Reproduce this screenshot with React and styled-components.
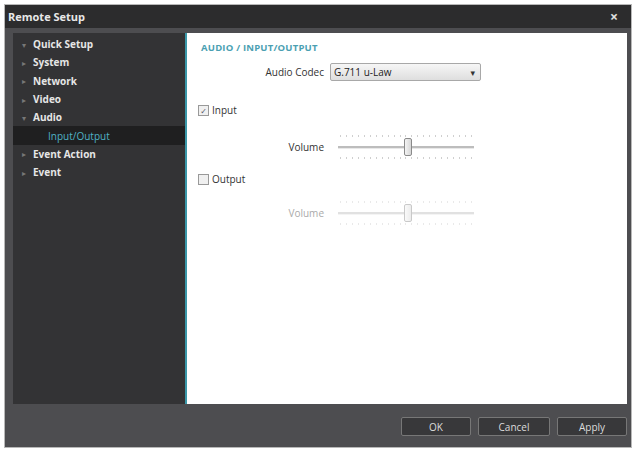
import React, { useState } from "react";
import styled, { createGlobalStyle } from "styled-components";

const GlobalStyle = createGlobalStyle`
  body {
    margin: 0;
    background: #ffffff;
    font-family: "Open Sans", "Noto Sans", "DejaVu Sans", sans-serif;
  }
`;

const menu = [
  { label: "Quick Setup", open: true },
  { label: "System" },
  { label: "Network" },
  { label: "Video" },
  { label: "Audio", open: true },
  { label: "Input/Output", child: true, active: true },
  { label: "Event Action" },
  { label: "Event" },
];

const Slider = ({ value, disabled }) => (
  <SliderBox disabled={disabled}>
    <Ticks>
      {Array.from({ length: 23 }).map((_, i) => (
        <Tick key={i} />
      ))}
    </Ticks>
    <Track>
      <Thumb style={{ left: `${value}%` }} />
    </Track>
    <Ticks>
      {Array.from({ length: 23 }).map((_, i) => (
        <Tick key={i} />
      ))}
    </Ticks>
  </SliderBox>
);

const App = () => {
  const [input, setInput] = useState(true);
  const [output, setOutput] = useState(false);

  return (
    <>
      <GlobalStyle />
      <Window>
        <TitleBar>
          <Title>Remote Setup</Title>
          <Close>×</Close>
        </TitleBar>
        <Body>
          <Main>
            <Sidebar>
              {menu.map((item) => (
                <MenuRow key={item.label} child={item.child} active={item.active}>
                  {!item.child && <Arrow>{item.open ? "▾" : "▸"}</Arrow>}
                  {item.label}
                </MenuRow>
              ))}
            </Sidebar>
            <Content>
              <Heading>AUDIO / INPUT/OUTPUT</Heading>
              <FieldRow top={9}>
                <Label>Audio Codec</Label>
                <Select>
                  <span>G.711 u-Law</span>
                  <Caret>▾</Caret>
                </Select>
              </FieldRow>
              <CheckRow top={23} onClick={() => setInput(!input)}>
                <Box>{input && "✓"}</Box>
                Input
              </CheckRow>
              <FieldRow top={19}>
                <Label>Volume</Label>
                <Slider value={50} />
              </FieldRow>
              <CheckRow top={14} onClick={() => setOutput(!output)}>
                <Box>{output && "✓"}</Box>
                Output
              </CheckRow>
              <FieldRow top={16}>
                <Label disabled>Volume</Label>
                <Slider value={50} disabled />
              </FieldRow>
            </Content>
          </Main>
          <Footer>
            <Button>OK</Button>
            <Button wide>Cancel</Button>
            <Button>Apply</Button>
          </Footer>
        </Body>
      </Window>
    </>
  );
};

const Window = styled.div`
  margin: 4px 0 0 4px;
  width: 628px;
  height: 444px;
  box-sizing: border-box;
  border: 1px solid #b8b8b8;
  display: flex;
  flex-direction: column;
  background-color: #4d4d50;
`;

const TitleBar = styled.div`
  height: 23px;
  display: flex;
  align-items: center;
  justify-content: space-between;
  padding: 0 13px 0 3px;
  background-color: #2c2c2d;
`;

const Title = styled.div`
  color: #e8e8e8;
  font-size: 11px;
  font-weight: 700;
`;

const Close = styled.div`
  color: #e0e0e0;
  font-size: 14px;
  font-weight: 700;
`;

const Body = styled.div`
  flex: 1;
  display: flex;
  flex-direction: column;
  padding: 5px 4px 10px 8px;
`;

const Main = styled.div`
  height: 371px;
  display: flex;
`;

const Sidebar = styled.div`
  width: 172px;
  padding-top: 2px;
  background-color: #333335;
  border-right: 2px solid #3a97a8;
`;

const MenuRow = styled.div`
  height: 18.3px;
  display: flex;
  align-items: center;
  padding-left: ${(p) => (p.child ? "35px" : "9px")};
  font-size: 10px;
  font-weight: ${(p) => (p.child ? 400 : 700)};
  color: ${(p) => (p.child ? "#4fb3c6" : "#e6e6e6")};
  background-color: ${(p) => (p.active ? "#1f1f20" : "transparent")};
`;

const Arrow = styled.span`
  width: 10px;
  margin-right: 1px;
  font-size: 8px;
  color: #777;
`;

const Content = styled.div`
  flex: 1;
  background-color: #ffffff;
  padding: 8px 0 0 11px;
  font-size: 10px;
  color: #333;
`;

const Heading = styled.div`
  height: 13px;
  line-height: 13px;
  margin-left: 3px;
  font-size: 9.5px;
  font-weight: 700;
  color: #4b9fb2;
  letter-spacing: 0.2px;
`;

const FieldRow = styled.div`
  display: flex;
  align-items: center;
  margin-top: ${(p) => p.top}px;
`;

const Label = styled.div`
  width: 132px;
  padding-right: 6px;
  box-sizing: border-box;
  text-align: right;
  color: ${(p) => (p.disabled ? "#aaa" : "#333")};
`;

const Select = styled.div`
  width: 151px;
  height: 18px;
  box-sizing: border-box;
  border: 1px solid #a8a8a8;
  border-radius: 2px;
  background: linear-gradient(#f6f6f6, #dedede);
  display: flex;
  align-items: center;
  justify-content: space-between;
  padding: 0 5px 0 3px;
  font-size: 10px;
  color: #222;
`;

const Caret = styled.span`
  font-size: 9px;
  color: #333;
`;

const CheckRow = styled.div`
  height: 12px;
  display: flex;
  align-items: center;
  gap: 3px;
  margin-top: ${(p) => p.top}px;
  cursor: pointer;
`;

const Box = styled.div`
  width: 9px;
  height: 9px;
  border: 1px solid #999;
  background: #f0f0f0;
  font-size: 8px;
  line-height: 9px;
  text-align: center;
  color: #556;
`;

const SliderBox = styled.div`
  width: 136px;
  height: 24px;
  margin-left: 8px;
  display: flex;
  flex-direction: column;
  justify-content: space-between;
  opacity: ${(p) => (p.disabled ? 0.45 : 1)};
`;

const Ticks = styled.div`
  display: flex;
  justify-content: space-between;
  padding: 0 2px;
`;

const Tick = styled.span`
  width: 1px;
  height: 2px;
  background: #cfcfcf;
`;

const Track = styled.div`
  position: relative;
  height: 2px;
  background: #bdbdbd;
  border-bottom: 1px solid #e8e8e8;
`;

const Thumb = styled.div`
  position: absolute;
  top: -8px;
  width: 8px;
  height: 18px;
  box-sizing: border-box;
  border: 1px solid #8a8a8a;
  border-radius: 2px;
  background: linear-gradient(90deg, #f4f4f4, #d6d6d6);
  transform: translateX(-2px);
`;

const Footer = styled.div`
  flex: 1;
  display: flex;
  align-items: center;
  justify-content: flex-end;
  gap: 7px;
  padding-top: 12px;
`;

const Button = styled.div`
  width: ${(p) => (p.wide ? "72px" : "70px")};
  height: 19px;
  box-sizing: border-box;
  display: flex;
  align-items: center;
  justify-content: center;
  border: 1px solid #777;
  border-radius: 2px;
  background-color: #38383a;
  color: #dcdcdc;
  font-size: 10px;
`;

export default App;
